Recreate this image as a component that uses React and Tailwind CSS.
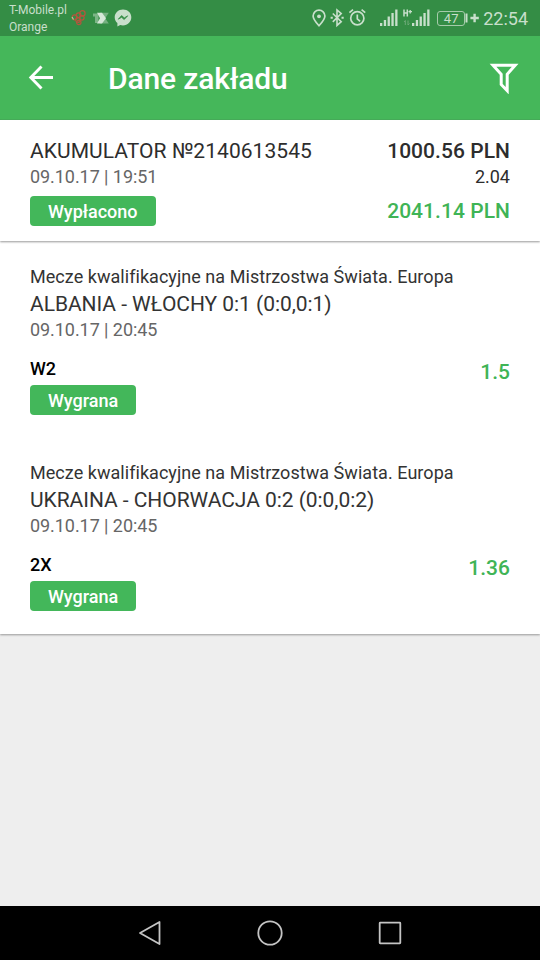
import React from 'react'

const bets = [
  {
    id: 1,
    league: 'Mecze kwalifikacyjne na Mistrzostwa Świata. Europa',
    match: 'ALBANIA - WŁOCHY 0:1 (0:0,0:1)',
    date: '09.10.17 | 20:45',
    pick: 'W2',
    odds: '1.5',
    status: 'Wygrana',
  },
  {
    id: 2,
    league: 'Mecze kwalifikacyjne na Mistrzostwa Świata. Europa',
    match: 'UKRAINA - CHORWACJA 0:2 (0:0,0:2)',
    date: '09.10.17 | 20:45',
    pick: '2X',
    odds: '1.36',
    status: 'Wygrana',
  },
]

const Badge = ({ children }) => (
  <span className="flex h-[30px] w-fit items-center rounded-[4px] bg-[#43b75a] px-[18px] pt-[1px] text-[18px] font-medium leading-[28px] text-white">
    {children}
  </span>
)

const Signal = () => (
  <svg width="18" height="18" viewBox="0 0 18 18" fill="#c8dfcb">
    <rect x="0" y="14" width="2.3" height="3" />
    <rect x="3.8" y="11" width="2.3" height="6" />
    <rect x="7.6" y="7.5" width="2.3" height="9.5" />
    <rect x="11.4" y="4" width="2.3" height="13" />
    <rect x="15.2" y="0.5" width="2.3" height="16.5" />
  </svg>
)

const StatusBar = () => (
  <div className="flex h-[36px] items-center bg-[#348d45] pl-[9px] pr-[12px] text-[#c8dfcb]">
    <div className="w-[62px] whitespace-nowrap text-[12px] leading-[16px] tracking-[-0.02px]">
      <p>T-Mobile.pl</p>
      <p className="pt-[1px]">Orange</p>
    </div>
    <svg className="shrink-0" width="62" height="20" viewBox="0 0 62 20" fill="none">
      <g stroke="#b5553d" strokeWidth="1.2">
        <circle cx="3.6" cy="9.3" r="2.5" />
        <circle cx="7.6" cy="7.3" r="2.4" />
        <circle cx="11.4" cy="5.4" r="2.7" />
        <circle cx="10.8" cy="9.8" r="2.3" />
        <circle cx="7" cy="12" r="2.3" />
        <circle cx="7.8" cy="14.5" r="2.2" />
      </g>
      <path d="M1 9l1.5 2.5" stroke="#b9c9a0" strokeWidth="1.2" />
      <path d="M22 5.5h5.500V15H24V8.500h-2z" fill="#7db587" />
      <path d="M29 4.800h8.800l-3.600 5.400 3.600 5.200H29z" fill="#76b080" />
      <path d="M26 4.800h5l4 5.400-4 5.200h-5l3-5.200z" fill="#d5e7d7" />
      <path
        d="M52 1.500c-4.700 0-8.300 3.400-8.300 7.800 0 2.400 1 4.400 2.700 5.800v3.500l2.800-1.600c.9.300 1.800.4 2.800.4 4.700 0 8.300-3.500 8.300-8.100s-3.600-7.800-8.300-7.800z"
        fill="#c8dfcb"
      />
      <path d="M47.300 11.200l3.300-3.600 2.700 2.300 3.400-2.100-3.500 3.700-2.600-2.200z" fill="#348d45" stroke="#348d45" strokeWidth="0.8" />
    </svg>
    <div className="ml-auto flex items-center">
      <svg width="56" height="20" viewBox="0 0 56 20" fill="none" stroke="#c8dfcb" strokeWidth="1.7">
        <path d="M8 17.800C5 14.500 2.100 11.200 2.100 8A5.900 5.900 0 0 1 13.900 8c0 3.200-2.900 6.500-5.900 9.800z" />
        <circle cx="8" cy="8.300" r="1.900" fill="#c8dfcb" stroke="none" />
        <path d="M21.800 5.500l8.400 8.200-4.200 3.700V2l4.200 3.600-8.400 8.300" strokeWidth="1.6" />
        <path d="M19.600 9.700h2.200M30.500 9.700h2.200" strokeWidth="2" />
        <circle cx="46.300" cy="10.300" r="6.600" />
        <path d="M46.300 6.500v4.300l2.800 2.500M38.400 4.700l3.600-3M50.600 1.700l3.600 3" />
      </svg>
      <div className="ml-[13px] flex">
        <Signal />
        <svg className="ml-[5px]" width="9" height="18" viewBox="0 0 9 18" fill="none">
          <path d="M1 0.500v7M4.300 0.500v7M1 4h3.300" stroke="#c8dfcb" strokeWidth="1.5" />
          <path d="M5.500 2.700h3.500M7.200 1v3.500" stroke="#c8dfcb" strokeWidth="1.3" />
          <path d="M2.300 16v-4.500L1 13M5 11.500V16l1.500-1.500" stroke="#6fab79" strokeWidth="1" />
        </svg>
        <Signal />
      </div>
      <div className="ml-[7px] flex h-[15px] w-[28px] items-center justify-center rounded-[3px] border border-[#a5cbaa] text-[13px] leading-none">
        47
      </div>
      <svg width="15" height="18" viewBox="0 0 15 18" fill="#c8dfcb">
        <rect x="0.500" y="4.500" width="2" height="9" />
        <path d="M8.400 4.800h2.400v3h3v2.400h-3v3H8.400v-3h-3V7.800h3z" />
      </svg>
      <span className="ml-[3px] pt-[2px] text-[18px] leading-[20px]">22:54</span>
    </div>
  </div>
)

const Header = () => (
  <header className="flex h-[84px] items-center border-b border-[#3fac53] bg-[#45b75a] pl-[28px] pr-[21px] text-white">
    <svg width="26" height="26" viewBox="0 0 26 26" fill="none" stroke="#fff" strokeWidth="2.9">
      <path d="M25 12.500H3M13.500 1.500L2.800 12.500l10.700 11" />
    </svg>
    <h1 className="ml-[54px] pt-[3px] text-[30px] font-medium leading-[44px] tracking-[-0.15px]">Dane zakładu</h1>
    <svg className="ml-auto" width="30" height="32" viewBox="0 0 30 32" fill="none" stroke="#fff" strokeWidth="3">
      <path d="M4 3.200h22.200L18.200 12.300v16.400l-6-6.200V12.300z" />
    </svg>
  </header>
)

const Bet = ({ bet }) => (
  <div className="h-[196px] pt-[23px]">
    <p className="text-[18px] leading-[26px] tracking-[0.045px] text-[#333]">{bet.league}</p>
    <p className="pt-[1px] text-[21px] leading-[26px] tracking-[-0.05px] text-[#333]">{bet.match}</p>
    <p className="text-[18px] leading-[26px] tracking-[-0.06px] text-[#666]">{bet.date}</p>
    <div className="mt-[13px] flex justify-between">
      <div>
        <p className="mb-[3px] text-[18px] font-medium leading-[26px] text-black">{bet.pick}</p>
        <Badge>{bet.status}</Badge>
      </div>
      <p className="pt-[1px] text-[21px] font-medium leading-[30px] text-[#3fb456]">{bet.odds}</p>
    </div>
  </div>
)

const App = () => {
  return (
    <div className="flex h-[960px] w-[540px] flex-col bg-[#eee] font-['Roboto',sans-serif]">
      <StatusBar />
      <Header />
      <section className="relative flex h-[121px] justify-between bg-white px-[30px] pt-[18px] shadow-[0_1px_2px_#999]">
        <div>
          <p className="text-[21px] leading-[26px] tracking-[0.05px] text-[#2d2d2d]">AKUMULATOR №2140613545</p>
          <p className="mb-[6px] text-[18px] leading-[26px] tracking-[-0.06px] text-[#666]">09.10.17 | 19:51</p>
          <Badge>Wypłacono</Badge>
        </div>
        <div className="text-right text-[#2d2d2d]">
          <p className="text-[21px] font-medium leading-[26px] tracking-[0.05px]">1000.56 PLN</p>
          <p className="mb-[6px] text-[18px] leading-[26px]">2.04</p>
          <p className="text-[21px] font-medium leading-[30px] tracking-[0.05px] text-[#3fb456]">2041.14 PLN</p>
        </div>
      </section>
      <section className="bg-white px-[30px] pb-[1px] shadow-[0_1px_2px_#999]">
        {bets.map((bet) => (
          <Bet key={bet.id} bet={bet} />
        ))}
      </section>
      <nav className="mt-auto flex h-[54px] items-center justify-center gap-[92px] bg-black">
        <svg width="28" height="28" viewBox="0 0 28 28" fill="none" stroke="#c4c4c4" strokeWidth="1.8" strokeLinejoin="round">
          <path d="M4 14L23.500 3v22z" />
        </svg>
        <svg width="28" height="28" viewBox="0 0 28 28" fill="none" stroke="#c4c4c4" strokeWidth="1.8">
          <circle cx="14" cy="14" r="11.7" />
        </svg>
        <svg width="28" height="28" viewBox="0 0 28 28" fill="none" stroke="#c4c4c4" strokeWidth="1.8">
          <rect x="3.7" y="3.7" width="20.6" height="20.6" rx="0.5" />
        </svg>
      </nav>
    </div>
  )
}

export default App
